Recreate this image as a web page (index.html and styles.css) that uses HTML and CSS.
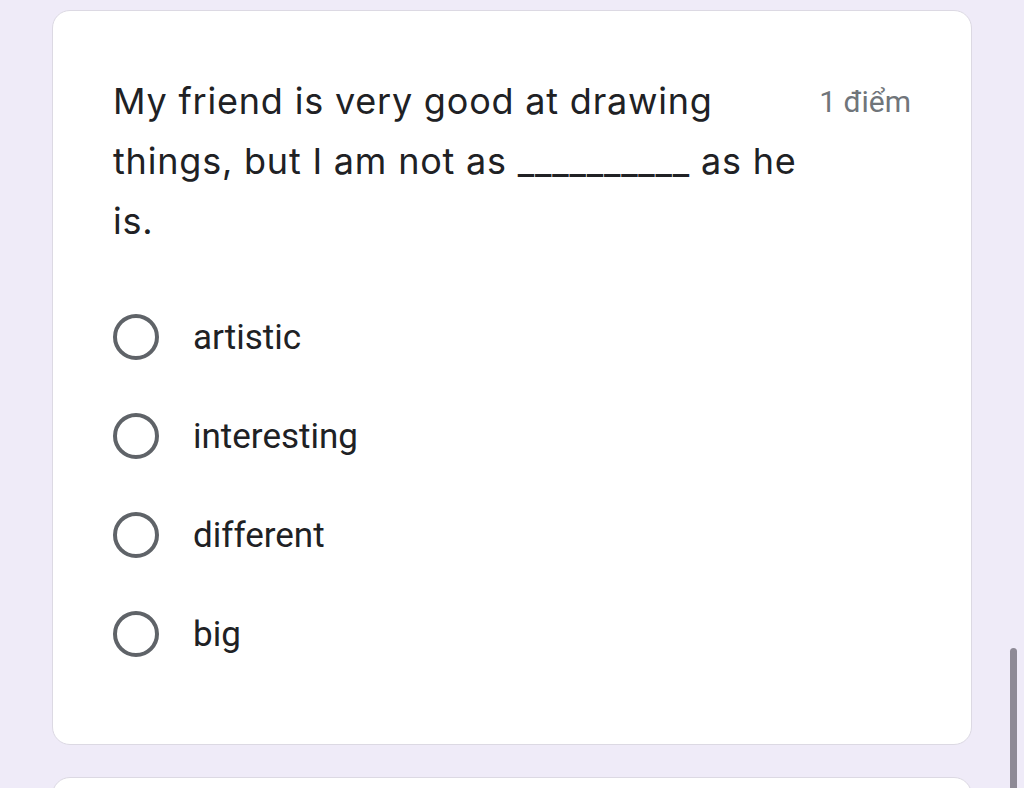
FILE: index.html
```html
<!DOCTYPE html>
<html>
<head>
<meta charset="utf-8">
<link rel="stylesheet" href="styles.css">
</head>
<body>
<div class="page">
  <div class="card">
    <div class="head">
      <div class="question">My friend is very good at drawing things, but I am not as __________ as he is.</div>
      <div class="points">1 điểm</div>
    </div>
    <div class="options">
      <div class="option"><span class="radio"></span><span class="label">artistic</span></div>
      <div class="option"><span class="radio"></span><span class="label">interesting</span></div>
      <div class="option"><span class="radio"></span><span class="label">different</span></div>
      <div class="option"><span class="radio"></span><span class="label">big</span></div>
    </div>
  </div>
  <div class="card next"></div>
</div>
<div class="scrollbar"></div>
</body>
</html>
```
FILE: styles.css
```css
html, body {
  margin: 0;
  padding: 0;
  background: #efebf8;
  height: 788px;
  overflow: hidden;
}
.page {
  padding: 10px 52px 0 52px;
  width: 920px;
  display: flex;
  flex-direction: column;
  gap: 32px;
}
.card {
  background: #fff;
  border: 1.5px solid #dcd9e3;
  border-radius: 18px;
  height: 735px;
  box-sizing: border-box;
  padding: 70px 60px 0 60px;
}
.card.next {
  height: 100px;
}
.head {
  display: flex;
  justify-content: space-between;
  align-items: flex-start;
}
.question {
  font-family: Inter, sans-serif;
  font-size: 36px;
  line-height: 60px;
  color: #202124;
  width: 700px;
  margin-top: -10px;
  letter-spacing: 0.8px;
}
.points {
  font-family: Roboto, sans-serif;
  font-size: 30px;
  color: #70757a;
  padding-top: 3px;
}
.options {
  margin-top: 63px;
  display: flex;
  flex-direction: column;
  gap: 53px;
}
.option {
  display: flex;
  align-items: center;
  height: 46px;
}
.radio {
  width: 46px;
  height: 46px;
  box-sizing: border-box;
  border: 4px solid #5f6368;
  border-radius: 50%;
  flex: none;
}
.label {
  font-family: Roboto, sans-serif;
  font-size: 35px;
  color: #202124;
  margin-left: 34px;
}
.scrollbar {
  position: absolute;
  left: 1010px;
  top: 648px;
  width: 7px;
  height: 160px;
  border-radius: 4px;
  background: #8e8a96;
}
```
